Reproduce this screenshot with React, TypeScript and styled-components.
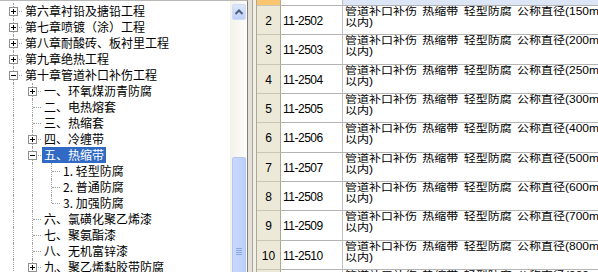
import React from "react";
import styled, { createGlobalStyle, css } from "styled-components";

const FONT = `"Noto Sans CJK SC", "Liberation Sans", sans-serif`;
const GRID_FONT = `"Liberation Sans", "Noto Sans CJK SC", sans-serif`;

const GlobalStyle = createGlobalStyle`
  html, body { margin: 0; padding: 0; background: #fff; }
  body { font-family: ${FONT}; font-size: 12px; color: #000; }
`;

const Window = styled.div`
  display: flex;
  width: 598px;
  height: 272px;
  overflow: hidden;
  background: #ece9d8;
`;

/* ---------- tree ---------- */

const TreePane = styled.div`
  display: flex;
  flex: none;
  width: 247px;
  border-top: 1px solid #b8b8b8;
  border-right: 1px solid #7f7f7f;
  background: #fff;
`;

const TreeBody = styled.ul`
  flex: 1;
  margin: 0;
  padding: 2px 0 0 3px;
  list-style: none;
  overflow: hidden;
`;

const TreeRow = styled.li`
  display: flex;
  align-items: center;
  height: 16px;
  white-space: nowrap;
`;

type Line = "none" | "pass" | "tee" | "end";

const Gutter = styled.span<{ $line: Line }>`
  position: relative;
  flex: none;
  width: 19px;
  height: 16px;

  ${({ $line }) =>
    $line !== "none" &&
    css`
      &::before {
        content: "";
        position: absolute;
        left: 10px;
        top: 0;
        height: ${$line === "end" ? "8px" : "16px"};
        border-left: 1px dotted #a0a0a0;
      }
    `}

  ${({ $line }) =>
    ($line === "tee" || $line === "end") &&
    css`
      &::after {
        content: "";
        position: absolute;
        left: 11px;
        top: 8px;
        width: 8px;
        border-top: 1px dotted #a0a0a0;
      }
    `}
`;

const ExpanderSvg = styled.svg`
  position: absolute;
  left: 6px;
  top: 4px;
  z-index: 1;
`;

const Label = styled.span<{ $selected?: boolean }>`
  margin-left: 1px;
  padding: 0 2px;
  height: 16px;
  line-height: 16px;
  background: ${(p) => (p.$selected ? "#316ac5" : "transparent")};
  color: ${(p) => (p.$selected ? "#fff" : "#000")};
`;

const Expander = ({ open }: { open: boolean }) => (
  <ExpanderSvg width="9" height="9" viewBox="0 0 9 9">
    <rect x="0.5" y="0.5" width="8" height="8" fill="#fff" stroke="#8e8f8f" />
    <path d="M2 4.5h5" stroke="#000" />
    {!open && <path d="M4.5 2v5" stroke="#000" />}
  </ExpanderSvg>
);

type TreeItem = {
  label: string;
  lines: Line[];
  box?: "plus" | "minus";
  selected?: boolean;
};

const treeItems: TreeItem[] = [
  { label: "第六章衬铅及搪铅工程", lines: ["tee"], box: "plus" },
  { label: "第七章喷镀（涂）工程", lines: ["tee"], box: "plus" },
  { label: "第八章耐酸砖、板衬里工程", lines: ["tee"], box: "plus" },
  { label: "第九章绝热工程", lines: ["tee"], box: "plus" },
  { label: "第十章管道补口补伤工程", lines: ["tee"], box: "minus" },
  { label: "一、环氧煤沥青防腐", lines: ["pass", "tee"], box: "plus" },
  { label: "二、电热熔套", lines: ["pass", "tee"] },
  { label: "三、热缩套", lines: ["pass", "tee"] },
  { label: "四、冷缠带", lines: ["pass", "tee"], box: "plus" },
  { label: "五、热缩带", lines: ["pass", "tee"], box: "minus", selected: true },
  { label: "1. 轻型防腐", lines: ["pass", "pass", "tee"] },
  { label: "2. 普通防腐", lines: ["pass", "pass", "tee"] },
  { label: "3. 加强防腐", lines: ["pass", "pass", "end"] },
  { label: "六、氯磺化聚乙烯漆", lines: ["pass", "tee"] },
  { label: "七、聚氨酯漆", lines: ["pass", "tee"] },
  { label: "八、无机富锌漆", lines: ["pass", "tee"] },
  { label: "九、聚乙烯黏胶带防腐", lines: ["pass", "tee"], box: "plus" },
];

/* ---------- scrollbar ---------- */

const VScroll = styled.div`
  flex: none;
  width: 17px;
  display: flex;
  flex-direction: column;
  padding: 3px 1px 0 2px;
  box-sizing: border-box;
  background: linear-gradient(to right, #f3f1ea, #fdfdfa);
  overflow: hidden;
`;

const ScrollButton = styled.div`
  flex: none;
  height: 16px;
  display: flex;
  align-items: center;
  justify-content: center;
  border: 1px solid #d0dcf6;
  border-radius: 2px;
  box-sizing: border-box;
  background: linear-gradient(#dde7fc, #bfd0f7);
`;

const Thumb = styled.div<{ $offset: number }>`
  flex: none;
  margin-top: ${(p) => p.$offset}px;
  height: 188px;
  display: flex;
  align-items: center;
  justify-content: center;
  border: 1px solid #b2c6f2;
  border-radius: 2px;
  box-sizing: border-box;
  background: linear-gradient(to right, #c9d8fc, #bccffa);
`;

/* ---------- grid ---------- */

const Splitter = styled.div`
  flex: none;
  width: 4px;
  background: #e4e2d8;
`;

const GridPane = styled.div`
  flex: 1;
  display: flex;
  border-left: 1px solid #a7a598;
  padding-left: 3px;
  background: #f1efe6;
  overflow: hidden;
`;

const GridBody = styled.div`
  flex: none;
  display: grid;
  grid-template-columns: 24px 62px 330px;
  grid-auto-rows: 29.33px;
  margin-top: -23.33px;
  border-left: 1px solid #aca899;
  background: #fff;
  align-self: flex-start;
  font-family: ${GRID_FONT};
`;

const HeadCell = styled.div<{ $current?: boolean }>`
  display: flex;
  align-items: center;
  justify-content: center;
  padding-top: 2px;
  box-sizing: border-box;
  background: ${(p) => (p.$current ? "#fbc56f" : "#ece9d8")};
  border-right: 1px solid #aca899;
  border-bottom: 1px solid #c9c6b8;
`;

const CodeCell = styled.div`
  display: flex;
  align-items: center;
  padding: 2px 0 0 2px;
  box-sizing: border-box;
  letter-spacing: -0.5px;
  border-right: 1px solid #c0c0c0;
  border-bottom: 1px solid #b4b4b4;
`;

const NameCell = styled.div<{ $current?: boolean }>`
  padding: 1px 0 0 2px;
  box-sizing: border-box;
  background: ${(p) => (p.$current ? "#dde6f6" : "#fff")};
  border-bottom: 1px solid #b4b4b4;
  white-space: nowrap;
  word-spacing: 2px;
`;

const NameLine = styled.span`
  display: block;
  height: 11px;
  line-height: 11px;
  transform: scaleY(0.85);
`;

const sizes = ["100", "150", "200", "250", "300", "400", "500", "600", "700", "800", "900"];

export default function App() {
  return (
    <>
      <GlobalStyle />
      <Window>
        <TreePane>
          <TreeBody>
            {treeItems.map((item) => (
              <TreeRow key={item.label}>
                {item.lines.map((line, i) => (
                  <Gutter key={i} $line={line}>
                    {i === item.lines.length - 1 && item.box && (
                      <Expander open={item.box === "minus"} />
                    )}
                  </Gutter>
                ))}
                <Label $selected={item.selected}>{item.label}</Label>
              </TreeRow>
            ))}
          </TreeBody>
          <VScroll>
            <ScrollButton>
              <svg width="8" height="6" viewBox="0 0 8 6">
                <path d="M0.5 5 L4 1.5 L7.5 5" fill="none" stroke="#4d6185" strokeWidth="2" />
              </svg>
            </ScrollButton>
            <Thumb $offset={137}>
              <svg width="6" height="7" viewBox="0 0 6 7">
                <path d="M0 0.5h6M0 2.5h6M0 4.5h6M0 6.5h6" stroke="#8aa6e6" />
              </svg>
            </Thumb>
          </VScroll>
        </TreePane>
        <Splitter />
        <GridPane>
          <GridBody>
            {sizes.map((size, i) => {
              const no = i + 1;
              const current = no === 1;
              return (
                <React.Fragment key={no}>
                  <HeadCell $current={current}>{no}</HeadCell>
                  <CodeCell>11-{2501 + i}</CodeCell>
                  <NameCell $current={current}>
                    <NameLine>管道补口补伤 热缩带 轻型防腐 公称直径({size}mm</NameLine>
                    <NameLine>以内)</NameLine>
                  </NameCell>
                </React.Fragment>
              );
            })}
          </GridBody>
        </GridPane>
      </Window>
    </>
  );
}
